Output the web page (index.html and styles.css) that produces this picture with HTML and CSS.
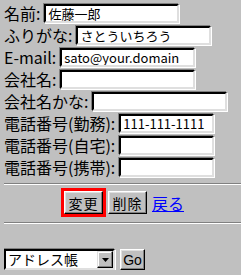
FILE: index.html
```html
<!DOCTYPE html>
<html lang="ja">
<head>
    <meta charset="UTF-8">
    <title>アドレス帳 - 編集</title>
    <link rel="stylesheet" href="styles.css">
</head>
<body>

    <!-- Entry form -->
    <form class="entry-form">
        <div class="row"><span class="label">名前:</span><input type="text" class="field" value="佐藤一郎"></div>
        <div class="row"><span class="label">ふりがな:</span><input type="text" class="field" value="さとういちろう"></div>
        <div class="row"><span class="label">E-mail:</span><input type="text" class="field" value="sato@your.domain"></div>
        <div class="row"><span class="label">会社名:</span><input type="text" class="field" value=""></div>
        <div class="row"><span class="label">会社名かな:</span><input type="text" class="field" value=""></div>
        <div class="row"><span class="label">電話番号(勤務):</span><input type="text" class="field field-tel" value="111-111-1111"></div>
        <div class="row"><span class="label">電話番号(自宅):</span><input type="text" class="field field-tel" value=""></div>
        <div class="row"><span class="label">電話番号(携帯):</span><input type="text" class="field field-tel" value=""></div>

        <hr class="rule rule-top">

        <div class="actions">
            <span class="focus-ring"><button type="button" class="btn">変更</button></span>
            <button type="button" class="btn">削除</button>
            <a href="#" class="back-link">戻る</a>
        </div>
    </form>

    <hr class="rule">

    <!-- Jump menu -->
    <div class="jump">
        <span class="combo">
            <select class="combo-select">
                <option>アドレス帳</option>
            </select>
            <span class="combo-arrow">
                <svg width="7" height="4" viewBox="0 0 7 4"><path d="M0 0H7L3.5 4Z" fill="#000"/></svg>
            </span>
        </span>
        <button type="button" class="btn btn-go">Go</button>
    </div>

</body>
</html>
```

FILE: styles.css
```css
/* Page */
body {
    margin: 2px 0 0 4px;
    background: #c0c0c0;
    color: #000;
    font-family: "Noto Sans CJK JP", "Noto Sans", sans-serif;
    font-size: 16px;
    line-height: 18px;
}

/* Form rows */
.row {
    display: flex;
    align-items: center;
    gap: 4px;
    height: 22px;
}

.label {
    white-space: nowrap;
}

.field {
    box-sizing: border-box;
    width: 135px;
    height: 19px;
    margin: 0;
    padding: 0 2px;
    background: #fff;
    border-style: solid;
    border-width: 2px;
    border-color: #000 #dfdfdf #dfdfdf #000;
    box-shadow: -1px -1px 0 #808080, 1px 1px 0 #fff;
    font-family: "Noto Sans CJK JP", "Noto Sans", sans-serif;
    font-size: 13px;
    line-height: 15px;
    color: #000;
    outline: none;
}

.field-tel {
    width: 95px;
}

/* Horizontal rules */
.rule {
    margin: 5px 0 0 0;
    height: 0;
    border: none;
    border-top: 1px solid #808080;
    border-bottom: 1px solid #fff;
}

/* Buttons row */
.actions {
    display: flex;
    align-items: center;
    justify-content: center;
    gap: 2px;
    margin-top: 3px;
    height: 29px;
}

.focus-ring {
    display: inline-flex;
    border: 3px solid #ff0000;
}

.btn {
    box-sizing: border-box;
    height: 23px;
    margin: 0;
    padding: 0;
    background: #c0c0c0;
    border-style: solid;
    border-width: 1px;
    border-color: #fff #000 #000 #fff;
    box-shadow: inset -1px -1px 0 #808080, inset 1px 1px 0 #dfdfdf;
    font-family: "Noto Sans CJK JP", "Noto Sans", sans-serif;
    font-size: 14px;
    line-height: 18px;
    white-space: nowrap;
    color: #000;
    cursor: pointer;
}

.actions .btn {
    width: 39px;
    letter-spacing: 1px;
}

.back-link {
    margin-left: 3px;
    color: #0000ff;
    font-size: 16px;
}

/* Jump menu */
.jump {
    display: flex;
    align-items: center;
    gap: 5px;
    margin-top: 25px;
}

.combo {
    box-sizing: border-box;
    display: inline-flex;
    align-items: stretch;
    width: 111px;
    height: 21px;
    background: #fff;
    border-style: solid;
    border-width: 2px;
    border-color: #000 #dfdfdf #dfdfdf #000;
    box-shadow: -1px -1px 0 #808080, 1px 1px 0 #fff;
}

.combo-select {
    flex: 1;
    min-width: 0;
    margin: 0;
    padding: 0 2px;
    border: none;
    background: #fff;
    appearance: none;
    -webkit-appearance: none;
    font-family: "Noto Sans CJK JP", "Noto Sans", sans-serif;
    font-size: 14px;
    line-height: 17px;
    color: #000;
    outline: none;
}

.combo-arrow {
    box-sizing: border-box;
    display: flex;
    align-items: center;
    justify-content: center;
    width: 16px;
    background: #c0c0c0;
    border-style: solid;
    border-width: 1px;
    border-color: #dfdfdf #000 #000 #dfdfdf;
    box-shadow: inset -1px -1px 0 #808080, inset 1px 1px 0 #fff;
}

.btn-go {
    width: 25px;
    height: 21px;
    padding: 0;
    font-family: "Liberation Sans", Arial, sans-serif;
    font-size: 14px;
}
```
